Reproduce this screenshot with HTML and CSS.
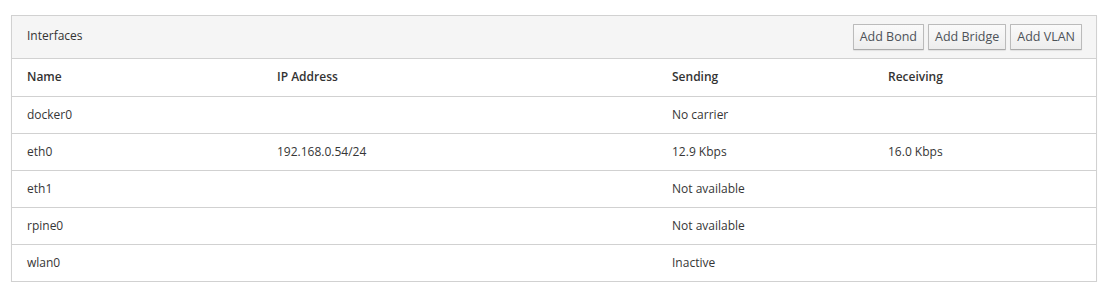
FILE: index.html
```html
<!DOCTYPE html>
<html lang="en">

<head>
    <meta charset="UTF-8">
    <title>Networking</title>
    <link rel="stylesheet" href="styles.css">
</head>

<body>
    <div class="panel">
        <div class="panel-heading">
            <span class="title">Interfaces</span>
            <div class="actions">
                <button class="btn">Add Bond</button>
                <button class="btn">Add Bridge</button>
                <button class="btn">Add VLAN</button>
            </div>
        </div>
        <table class="ifaces">
            <thead>
                <tr>
                    <th class="c-name">Name</th>
                    <th class="c-ip">IP Address</th>
                    <th class="c-send">Sending</th>
                    <th>Receiving</th>
                </tr>
            </thead>
            <tbody>
                <tr>
                    <td>docker0</td>
                    <td></td>
                    <td>No carrier</td>
                    <td></td>
                </tr>
                <tr>
                    <td>eth0</td>
                    <td>192.168.0.54/24</td>
                    <td>12.9 Kbps</td>
                    <td>16.0 Kbps</td>
                </tr>
                <tr>
                    <td>eth1</td>
                    <td></td>
                    <td>Not available</td>
                    <td></td>
                </tr>
                <tr>
                    <td>rpine0</td>
                    <td></td>
                    <td>Not available</td>
                    <td></td>
                </tr>
                <tr>
                    <td>wlan0</td>
                    <td></td>
                    <td>Inactive</td>
                    <td></td>
                </tr>
            </tbody>
        </table>
    </div>
</body>

</html>
```

FILE: styles.css
```css
* {
  box-sizing: border-box;
}

body {
  margin: 0;
  padding: 15px 11px 0 11px;
  background: #fff;
  color: #363636;
  font: normal 12px/20px "Open Sans", sans-serif;
}

.panel {
  width: 1086px;
  border: 1px solid #d1d1d1;
  box-shadow: 0 1px 1px rgba(0, 0, 0, 0.05);
}

.panel-heading {
  display: flex;
  align-items: center;
  justify-content: space-between;
  height: 43px;
  padding: 0 14px 0 15px;
  background: #f5f5f5;
  border-bottom: 1px solid #d1d1d1;
}
.panel-heading .title {
  color: #333;
  margin-top: -3px;
}

.actions {
  display: flex;
  gap: 4px;
}

.btn {
  height: 26px;
  padding: 0 6px;
  font: normal 12.5px/20px "Open Sans", sans-serif;
  color: #4d5258;
  background: linear-gradient(#fafafa, #ededed);
  border: 1px solid #bbb;
  border-bottom-color: #aaa;
  border-radius: 1px;
  box-shadow: 0 1px 1px rgba(3, 3, 3, 0.08);
}

.ifaces {
  width: 100%;
  border-collapse: collapse;
  table-layout: fixed;
}
.ifaces th, .ifaces td {
  height: 37px;
  padding: 0 15px;
  text-align: left;
  vertical-align: middle;
  border-bottom: 1px solid #d1d1d1;
}
.ifaces tr:last-child td {
  border-bottom: none;
}
.ifaces th {
  font-weight: 600;
  color: #333;
}
.ifaces .c-name {
  width: 250px;
}
.ifaces .c-ip {
  width: 395px;
}
.ifaces .c-send {
  width: 216px;
}
```
